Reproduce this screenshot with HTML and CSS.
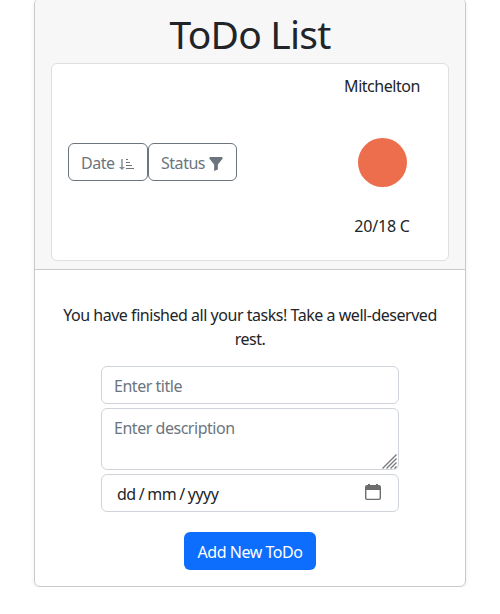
FILE: index.html
```html
<!DOCTYPE html>
<html lang="en">
<head>
<meta charset="utf-8">
<title>ToDo List</title>
<link rel="stylesheet" href="styles.css">
</head>
<body>
<main class="card">
  <header class="card-header">
    <h1>ToDo List</h1>
    <section class="panel">
      <div class="filters">
        <button class="btn btn-date"><span>Date</span>
          <svg width="16" height="16" viewBox="0 0 16 16"><path d="M3 3v9" stroke="#a5abb1" stroke-width="2"/><path d="M0 11h6L3 14z" fill="#868d94"/><path d="M7 3.5h2M7 6.5h4M7 9.500h6M7 12.500h8" stroke="#6c757d" stroke-width="1"/></svg>
        </button>
        <button class="btn btn-status"><span>Status</span>
          <svg width="14" height="14" viewBox="0 0 14 15"><path d="M.5 0h13q.5 0 .5.5V2L9 8v5.500L5 15V8L0 2V.5Q0 0 .5 0z" fill="#6c757d"/></svg>
        </button>
      </div>
      <div class="weather">
        <span class="city">Mitchelton</span>
        <svg class="sun" width="100" height="100" viewBox="0 0 100 100"><circle cx="49.5" cy="50.5" r="24.5" fill="#ec6e4c"/></svg>
        <span class="temp">20/18 C</span>
      </div>
    </section>
  </header>
  <div class="card-body">
    <p class="message">You have finished all your tasks! Take a well-deserved<br>rest.</p>
    <form class="form">
      <input class="control" type="text" placeholder="Enter title">
      <div class="control area"><span>Enter description</span>
        <svg class="grip" width="15" height="15" viewBox="0 0 15 15"><path d="M.5 14.500l14-14M4.500 14.500l10-10M8.500 14.500l6-6M12.500 14.500l2-2" stroke="#77777b" stroke-width="1.3"/></svg>
      </div>
      <div class="control date"><span class="date-text"><span>dd</span><span>/</span><span>mm</span><span>/</span><span>yyyy</span></span>
        <svg width="16" height="16" viewBox="0 0 16 16"><path d="M3 0h2v1h6V0h2v1h1q2 0 2 2v11q0 2-2 2H2q-2 0-2-2V3q0-2 2-2h1zM1.400 6v8q0 .7.7.7h11.800q.7 0 .7-.7V6z" fill="#6d6d70" fill-rule="evenodd"/></svg>
      </div>
      <button class="submit" type="button">Add New ToDo</button>
    </form>
  </div>
</main>
</body>
</html>
```
FILE: styles.css
```css
* { box-sizing: border-box; }
html { overflow: hidden; }
body {
  margin: 0;
  display: flow-root;
  background: #fff;
  color: #212529;
  font: 16px/24px "Noto Sans", sans-serif;
  letter-spacing: -0.47px;
}
button, input { font: inherit; letter-spacing: inherit; }
svg { display: block; flex: none; }
.card {
  width: 432px;
  height: 589px;
  margin: -2px auto 0;
  border: 1px solid #c8c9ca;
  border-radius: 6px;
  box-shadow: 0 2px 4px rgba(0, 0, 0, .075);
}
.card-header {
  padding: 11px 16px 8px;
  background: #f7f7f7;
  border-bottom: 1px solid #c8c9ca;
  border-radius: 5px 5px 0 0;
}
h1 {
  margin: 0 0 5px;
  font-size: 39px;
  line-height: 48px;
  font-weight: 400;
  letter-spacing: -0.8px;
  text-align: center;
}
.panel {
  display: flex;
  justify-content: space-between;
  align-items: center;
  height: 198px;
  padding: 0 15px 0 16px;
  background: #fff;
  border: 1px solid #dedfe0;
  border-radius: 6px;
}
.filters { display: flex; }
.btn {
  display: flex;
  align-items: center;
  gap: 4px;
  height: 38px;
  padding: 2px 12px 0;
  background: #fff;
  border: 1px solid #6c757d;
  border-radius: 6px;
  color: #6c757d;
}
.btn svg { margin-top: 2px; }
.btn-date { width: 80px; }
.btn-status { width: 89px; }
.weather {
  display: flex;
  flex-direction: column;
  align-items: center;
  width: 100px;
  padding-bottom: 12px;
}
.city { margin-bottom: 14px; }
.temp { margin-top: 2px; }
.city, .temp { padding-right: 2px; }
.temp { letter-spacing: -0.2px; }
.card-body { padding: 33px 16px 16px; }
.message { margin: 0 0 15px; text-align: center; white-space: nowrap; }
.form {
  display: flex;
  flex-direction: column;
  align-items: center;
  gap: 4px;
}
.control {
  width: 298px;
  height: 38px;
  padding: 7px 12px 5px;
  background: #fff;
  border: 1px solid #ced4da;
  border-radius: 6px;
  color: #212529;
}
.control::placeholder { color: #6c757d; opacity: 1; }
.area { position: relative; height: 62px; color: #6c757d; }
.grip { position: absolute; right: 1px; bottom: 0; }
.date {
  display: flex;
  align-items: center;
  justify-content: space-between;
  padding: 3px 17px 5px 15px;
}
.date-text { display: flex; gap: 3px; padding-top: 4px; }
.submit {
  width: 132px;
  height: 38px;
  margin-top: 16px;
  padding: 2px 0 0;
  background: #0d6efd;
  border: 0;
  border-radius: 6px;
  color: #fff;
}
```
